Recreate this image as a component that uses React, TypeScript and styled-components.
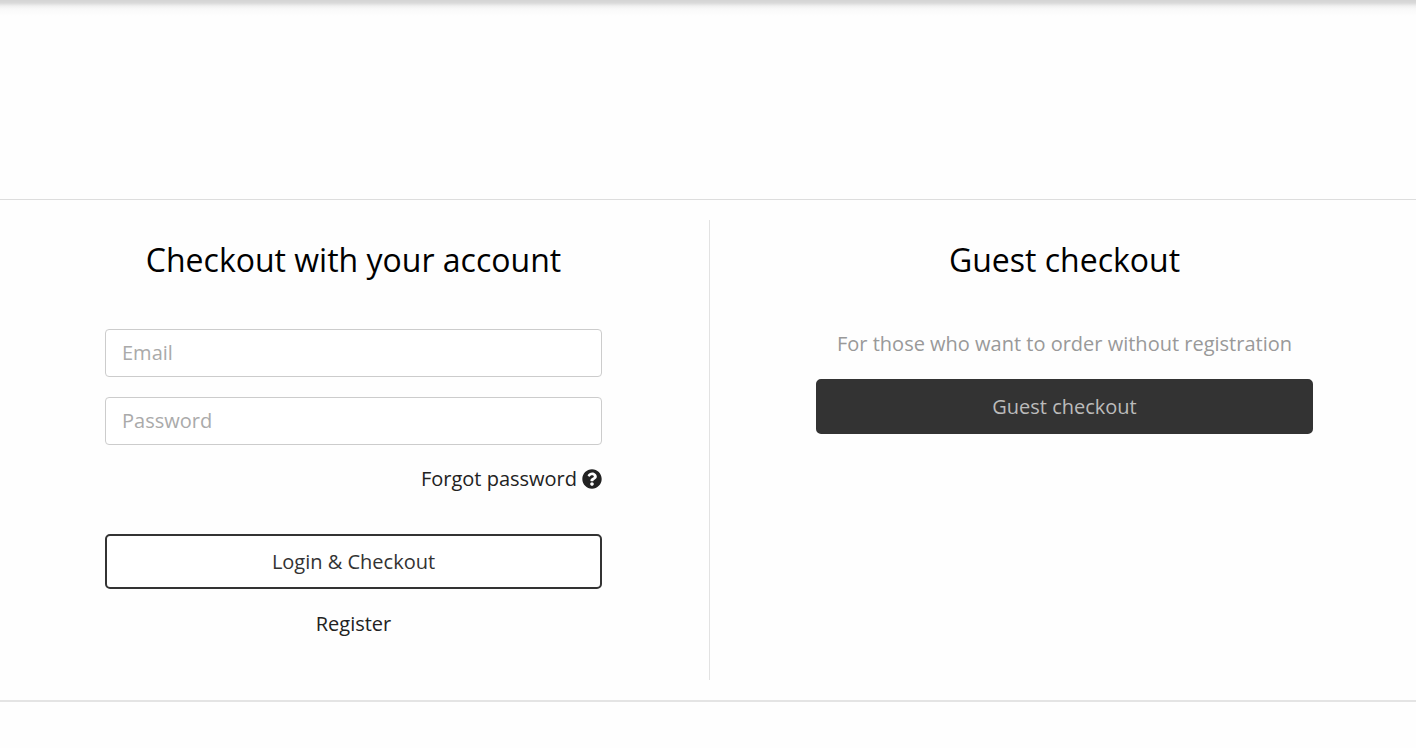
import React from "react";
import styled, { createGlobalStyle } from "styled-components";
import { FaQuestionCircle } from "react-icons/fa";

const GlobalStyle = createGlobalStyle`
  *, *::before, *::after { box-sizing: border-box; }
  body {
    margin: 0;
    background: #fefefe;
    color: #222;
    font-family: "Open Sans", sans-serif;
    font-size: 20px;
    line-height: 28px;
  }
`;

const Header = styled.header`
  height: 199px;
  background: linear-gradient(#d4d4d4 0, #dadada 3px, #f0f0f0 6px, #f9f9f9 9px, #fefefe 16px);
`;

const Panel = styled.main`
  display: flex;
  padding: 20px 0;
  border-top: 1px solid #ddd;
  border-bottom: 2px solid #e4e4e4;
`;

const Column = styled.section<{ $divided?: boolean }>`
  flex: 1 1 0;
  min-width: 0;
  display: flex;
  flex-direction: column;
  align-items: stretch;
  min-height: 460px;
  padding: ${(p) => (p.$divided ? "0 107px 0 105px" : "0 103px 0 106px")};
  border-right: ${(p) => (p.$divided ? "1px solid #e2e2e2" : "0")};
`;

const Title = styled.h1`
  margin: 16px 0 45px;
  color: #000;
  font-size: 32px;
  font-weight: 400;
  line-height: 48px;
  text-align: center;
`;

const Form = styled.form`
  display: flex;
  flex-direction: column;
`;

const Field = styled.input`
  width: 100%;
  height: 48px;
  margin-bottom: 20px;
  padding: 0 16px 2px;
  border: 1px solid #ccc;
  border-radius: 4px;
  background: #fff;
  color: #222;
  font: inherit;
  &::placeholder { color: #aaa; opacity: 1; }
`;

const TextLink = styled.a`
  color: #222;
  text-decoration: none;
`;

const ForgotLink = styled(TextLink)`
  display: flex;
  align-items: center;
  align-self: flex-end;
  gap: 5px;
`;

const RegisterLink = styled(TextLink)`
  align-self: center;
  margin-top: 21px;
`;

const Button = styled.button<{ $filled?: boolean }>`
  width: 100%;
  height: 55px;
  padding: 0 16px;
  border: 2px solid #333;
  border-radius: 5px;
  background: ${(p) => (p.$filled ? "#333" : "#fff")};
  color: ${(p) => (p.$filled ? "#bbb" : "#333")};
  font: inherit;
  cursor: pointer;
`;

const LoginButton = styled(Button)`
  margin-top: 41px;
`;

const Note = styled.p`
  margin: 1px 0 21px;
  color: #999;
  text-align: center;
`;

export default function App() {
  return (
    <>
      <GlobalStyle />
      <Header />
      <Panel>
        <Column $divided>
          <Title>Checkout with your account</Title>
          <Form onSubmit={(e) => e.preventDefault()}>
            <Field type="email" placeholder="Email" aria-label="Email" />
            <Field type="password" placeholder="Password" aria-label="Password" />
            <ForgotLink href="#forgot">
              Forgot password
              <FaQuestionCircle size={20} aria-hidden="true" />
            </ForgotLink>
            <LoginButton type="submit">Login &amp; Checkout</LoginButton>
            <RegisterLink href="#register">Register</RegisterLink>
          </Form>
        </Column>
        <Column>
          <Title>Guest checkout</Title>
          <Note>For those who want to order without registration</Note>
          <Button type="button" $filled>Guest checkout</Button>
        </Column>
      </Panel>
    </>
  );
}
